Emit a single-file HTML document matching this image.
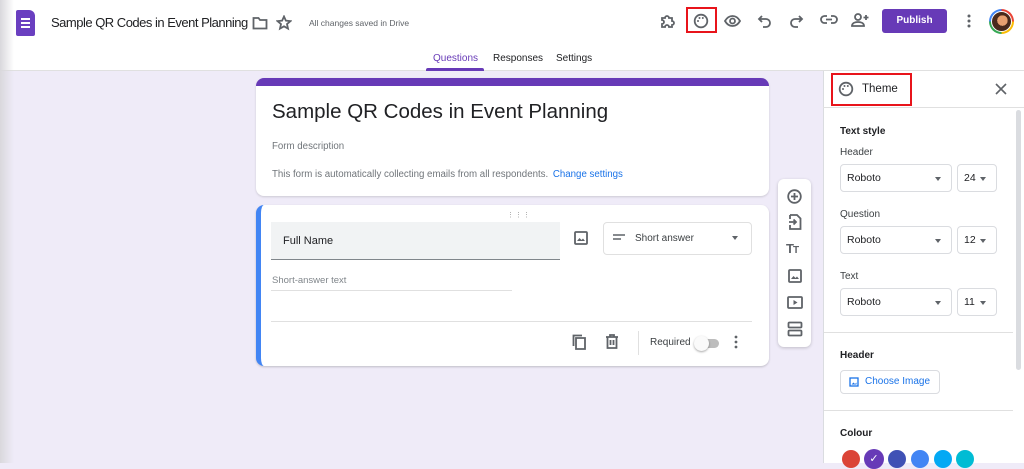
<!DOCTYPE html>
<html><head><meta charset="utf-8"><style>
*{box-sizing:border-box;margin:0;padding:0}
body{width:1024px;height:463px;overflow:hidden;background:#efebf8;font-family:"Liberation Sans",Arial,sans-serif;color:#202124;position:relative}
.abs{position:absolute}
svg{display:block}
.ic{stroke:#5f6368;fill:none;stroke-width:1.8}
.sel{position:absolute;border:1px solid #dadce0;border-radius:4px;background:#fff;font-size:10.5px;color:#202124;padding-left:6px;display:flex;align-items:center}
.sel:after{content:"";position:absolute;right:10px;top:50%;margin-top:-1px;border:3px solid transparent;border-top:4px solid #5f6368}
.lbl{position:absolute;font-size:11px;color:#3c4043}
</style></head><body>
<div class="abs" style="left:0;top:0;width:1024px;height:71px;background:#fff;border-bottom:1px solid #e0e0e0"></div>
<div class="abs" style="left:0;top:0;width:14px;height:463px;background:linear-gradient(90deg,#d9d8dc,rgba(230,228,235,0))"></div>
<div class="abs" style="left:16px;top:10px;width:19px;height:26px;background:#6a3fc0;border-radius:2px 6px 2px 2px"></div>
<div class="abs" style="left:21px;top:18px;width:9px;height:10px;border-top:2px solid #fff;border-bottom:2px solid #fff"><div style="margin-top:2px;height:2px;background:#fff"></div></div>
<div class="abs" style="left:51px;top:15px;font-size:13px;letter-spacing:-0.5px;color:#202124">Sample QR Codes in Event Planning</div>
<svg class="abs" style="left:252px;top:16px" width="16" height="14"><path class="ic" d="M1.5 2h5l1.5 2h6.5v8.5h-13z" stroke-width="1.5"/></svg>
<svg class="abs" style="left:276px;top:15px" width="16" height="16"><path class="ic" stroke-width="1.3" d="M8 1.5l1.9 4.2 4.6.4-3.5 3 1 4.5L8 11.3l-4 2.3 1-4.5-3.5-3 4.6-.4z"/></svg>
<div class="abs" style="left:309px;top:18px;font-size:8.5px;color:#5f6368">All changes saved in Drive</div>
<svg class="abs" style="left:660px;top:13px" width="16" height="16"><path class="ic" stroke-width="1.5" d="M2 5h3a2 2 0 1 1 4 0h3v3a2 2 0 1 1 0 4v2H9a2 2 0 1 0-4 0H2v-3a2 2 0 1 0 0-4z"/></svg>
<div class="abs" style="left:686px;top:7px;width:31px;height:26px;border:2px solid #e8141b"></div>
<svg class="abs" style="left:693px;top:13px" width="16" height="16"><circle class="ic" stroke-width="1.4" cx="8" cy="8" r="6.3"/><circle cx="5" cy="8" r="1" fill="#5f6368"/><circle cx="6.5" cy="5" r="1" fill="#5f6368"/><circle cx="9.8" cy="5" r="1" fill="#5f6368"/></svg>
<svg class="abs" style="left:724px;top:14px" width="17" height="14"><path class="ic" stroke-width="1.4" d="M1 7c2-3.5 4.5-5 7.5-5S14 3.5 16 7c-2 3.5-4.5 5-7.5 5S3 10.5 1 7z"/><circle class="ic" stroke-width="1.4" cx="8.5" cy="7" r="2.5"/></svg>
<svg class="abs" style="left:757px;top:13px" width="16" height="16"><path class="ic" stroke-width="1.4" d="M5 3L2 6l3 3M2 6h7a4 4 0 0 1 0 8H6"/></svg>
<svg class="abs" style="left:788px;top:13px" width="16" height="16"><path class="ic" stroke-width="1.4" d="M11 3l3 3-3 3M14 6H7a4 4 0 0 0 0 8h3"/></svg>
<svg class="abs" style="left:820px;top:14px" width="18" height="12"><path class="ic" stroke-width="1.5" d="M7 2H4.5a3.5 3.5 0 0 0 0 7H7M11 2h2.5a3.5 3.5 0 0 1 0 7H11M6 5.5h6"/></svg>
<svg class="abs" style="left:851px;top:12px" width="18" height="16"><circle class="ic" stroke-width="1.4" cx="7" cy="5" r="3"/><path class="ic" stroke-width="1.4" d="M1 14c0-3 3-4 6-4s6 1 6 4zM15 3v5M12.5 5.5h5"/></svg>
<div class="abs" style="left:882px;top:9px;width:65px;height:24px;background:#673ab7;border-radius:3px;color:#fff;font-size:10px;font-weight:bold;text-align:center;line-height:24px">Publish</div>
<svg class="abs" style="left:966px;top:13px" width="6" height="16"><circle cx="3" cy="3" r="1.5" fill="#5f6368"/><circle cx="3" cy="8" r="1.5" fill="#5f6368"/><circle cx="3" cy="13" r="1.5" fill="#5f6368"/></svg>
<div class="abs" style="left:989px;top:9px;width:25px;height:25px;border-radius:50%;background:conic-gradient(#ea4335 0 25%,#fbbc04 0 50%,#34a853 0 75%,#4285f4 0);padding:2px"><div style="width:100%;height:100%;border-radius:50%;background:radial-gradient(circle at 55% 45%,#e8a070 0 35%,#4a2a1c 36%);border:1px solid #fff"></div></div>
<div class="abs" style="left:433px;top:53px;font-size:10px;color:#673ab7">Questions</div>
<div class="abs" style="left:426px;top:68px;width:58px;height:3px;background:#673ab7;border-radius:2px 2px 0 0"></div>
<div class="abs" style="left:493px;top:53px;font-size:10px;color:#202124">Responses</div>
<div class="abs" style="left:556px;top:53px;font-size:10px;color:#202124">Settings</div>
<div class="abs" style="left:256px;top:78px;width:513px;height:118px;background:#fff;border-radius:8px;border-top:8px solid #673ab7;box-shadow:0 1px 2px rgba(0,0,0,.15)"></div>
<div class="abs" style="left:272px;top:100px;font-size:20.5px;color:#202124">Sample QR Codes in Event Planning</div>
<div class="abs" style="left:272px;top:141px;font-size:9.7px;color:#70757a">Form description</div>
<div class="abs" style="left:272px;top:169px;font-size:9.7px;color:#70757a">This form is automatically collecting emails from all respondents. <span style="color:#1a73e8;margin-left:2px">Change settings</span></div>
<div class="abs" style="left:256px;top:205px;width:513px;height:161px;background:#fff;border-radius:8px;border-left:5px solid #4285f4;box-shadow:0 1px 2px rgba(0,0,0,.2)"></div>
<div class="abs" style="left:507px;top:211px;font-size:7px;color:#999;letter-spacing:1px">⋮⋮⋮</div>
<div class="abs" style="left:271px;top:222px;width:289px;height:38px;background:#f1f3f4;border-bottom:1px solid #80868b"></div>
<div class="abs" style="left:283px;top:235px;font-size:11px;color:#202124">Full Name</div>
<svg class="abs" style="left:574px;top:231px" width="14" height="14"><rect class="ic" stroke-width="1.4" x="1" y="1" width="12" height="12" rx="1"/><path d="M3 10l2.5-3 2 2 1.5-1.5L11 10z" fill="#5f6368"/></svg>
<div class="abs" style="left:603px;top:222px;width:149px;height:33px;border:1px solid #e0e0e0;border-radius:4px"></div>
<svg class="abs" style="left:613px;top:234px" width="12" height="8"><path stroke="#5f6368" stroke-width="1.5" d="M0 1h12M0 5h8"/></svg>
<div class="abs" style="left:635px;top:233px;font-size:10px;color:#3c4043">Short answer</div>
<div class="abs" style="left:732px;top:236px;border:3px solid transparent;border-top:4px solid #5f6368"></div>
<div class="abs" style="left:272px;top:275px;font-size:9.5px;color:#80868b">Short-answer text</div>
<div class="abs" style="left:271px;top:290px;width:241px;height:1px;background:#e0e0e0"></div>
<div class="abs" style="left:271px;top:321px;width:481px;height:1px;background:#e0e0e0"></div>
<svg class="abs" style="left:572px;top:334px" width="14" height="16"><path class="ic" stroke-width="1.5" d="M4 4h9v11H4zM1.5 12V1.5H10"/></svg>
<svg class="abs" style="left:605px;top:334px" width="14" height="15"><path class="ic" stroke-width="1.5" d="M1 3h12M5 3V1h4v2M2.5 3v11h9V3M5.5 6v5M8.5 6v5"/></svg>
<div class="abs" style="left:638px;top:331px;width:1px;height:24px;background:#e0e0e0"></div>
<div class="abs" style="left:650px;top:337px;font-size:10px;color:#3c4043">Required</div>
<div class="abs" style="left:697px;top:339px;width:22px;height:9px;border-radius:5px;background:#bdbdbd"></div>
<div class="abs" style="left:694px;top:336px;width:15px;height:15px;border-radius:50%;background:#fafafa;box-shadow:0 1px 2px rgba(0,0,0,.35)"></div>
<svg class="abs" style="left:733px;top:335px" width="6" height="14"><circle cx="3" cy="2" r="1.4" fill="#5f6368"/><circle cx="3" cy="7" r="1.4" fill="#5f6368"/><circle cx="3" cy="12" r="1.4" fill="#5f6368"/></svg>
<div class="abs" style="left:778px;top:179px;width:33px;height:168px;background:#fff;border-radius:6px;box-shadow:0 1px 3px rgba(0,0,0,.2)"></div>
<svg class="abs" style="left:787px;top:189px" width="15" height="15"><circle class="ic" stroke-width="1.4" cx="7.5" cy="7.5" r="6.3"/><path class="ic" stroke-width="1.4" d="M7.5 4v7M4 7.5h7"/></svg>
<svg class="abs" style="left:788px;top:214px" width="14" height="16"><path class="ic" stroke-width="1.4" d="M2 1h7l3.5 3.5V15H2V11M2 5V1M1 8h7M5.5 5.5L8 8l-2.5 2.5"/></svg>
<div class="abs" style="left:786px;top:241px;font-size:13px;font-weight:bold;color:#5f6368;letter-spacing:-1px">T<span style="font-size:10px">T</span></div>
<svg class="abs" style="left:788px;top:269px" width="14" height="14"><rect class="ic" stroke-width="1.4" x="1" y="1" width="12" height="12" rx="1"/><path d="M3 10l2.5-3 2 2 1.5-1.5L11 10z" fill="#5f6368"/></svg>
<svg class="abs" style="left:787px;top:296px" width="16" height="13"><rect class="ic" stroke-width="1.4" x="1" y="1" width="14" height="11" rx="1"/><path d="M6.5 4v5l4-2.5z" fill="#5f6368"/></svg>
<svg class="abs" style="left:787px;top:321px" width="16" height="16"><rect class="ic" stroke-width="1.4" x="1.5" y="1.5" width="13" height="5" rx="1"/><rect class="ic" stroke-width="1.4" x="1.5" y="9.5" width="13" height="5" rx="1"/></svg>
<div class="abs" style="left:823px;top:71px;width:201px;height:392px;background:#fff;border-left:1px solid #dadce0"></div>
<div class="abs" style="left:823px;top:107px;width:201px;height:1px;background:#e0e0e0"></div>
<div class="abs" style="left:831px;top:73px;width:81px;height:33px;border:2px solid #e8141b"></div>
<svg class="abs" style="left:838px;top:81px" width="16" height="16"><circle class="ic" stroke-width="1.4" cx="8" cy="8" r="6.3"/><circle cx="5" cy="8" r="1" fill="#5f6368"/><circle cx="6.5" cy="5" r="1" fill="#5f6368"/><circle cx="9.8" cy="5" r="1" fill="#5f6368"/></svg>
<div class="abs" style="left:862px;top:83px;font-size:11.5px;color:#202124">Theme</div>
<svg class="abs" style="left:995px;top:83px" width="12" height="12"><path stroke="#5f6368" stroke-width="1.6" d="M1 1l10 10M11 1L1 11"/></svg>
<div class="abs" style="left:1016px;top:110px;width:5px;height:260px;background:#dadce0;border-radius:3px"></div>
<div class="lbl" style="left:840px;top:126px;font-weight:bold;color:#202124;font-size:10px">Text style</div>
<div class="lbl" style="left:840px;top:147px;font-size:10px">Header</div>
<div class="sel" style="left:840px;top:164px;width:112px;height:28px">Roboto</div>
<div class="sel" style="left:957px;top:164px;width:40px;height:28px">24</div>
<div class="lbl" style="left:840px;top:209px;font-size:10px">Question</div>
<div class="sel" style="left:840px;top:226px;width:112px;height:28px">Roboto</div>
<div class="sel" style="left:957px;top:226px;width:40px;height:28px">12</div>
<div class="lbl" style="left:840px;top:271px;font-size:10px">Text</div>
<div class="sel" style="left:840px;top:288px;width:112px;height:28px">Roboto</div>
<div class="sel" style="left:957px;top:288px;width:40px;height:28px">11</div>
<div class="abs" style="left:824px;top:332px;width:189px;height:1px;background:#e0e0e0"></div>
<div class="lbl" style="left:840px;top:350px;font-weight:bold;color:#202124;font-size:10px">Header</div>
<div class="abs" style="left:840px;top:370px;width:100px;height:24px;border:1px solid #dadce0;border-radius:4px"></div>
<svg class="abs" style="left:849px;top:377px" width="10" height="10"><rect x="1" y="1" width="8" height="8" fill="none" stroke="#1a73e8" stroke-width="1.3"/><path d="M2.5 7.5l2-2 1.5 1.5 1.5-1.5v2z" fill="#1a73e8"/></svg>
<div class="abs" style="left:865px;top:376px;font-size:10px;color:#1a73e8">Choose Image</div>
<div class="abs" style="left:824px;top:410px;width:189px;height:1px;background:#e0e0e0"></div>
<div class="lbl" style="left:840px;top:428px;font-weight:bold;color:#202124;font-size:10px">Colour</div>
<div class="abs" style="left:842px;top:450px;width:18px;height:18px;border-radius:50%;background:#db4437"></div>
<div class="abs" style="left:864px;top:449px;width:20px;height:20px;border-radius:50%;background:#673ab7;color:#fff;font-size:11px;text-align:center;line-height:20px">✓</div>
<div class="abs" style="left:888px;top:450px;width:18px;height:18px;border-radius:50%;background:#3f51b5"></div>
<div class="abs" style="left:911px;top:450px;width:18px;height:18px;border-radius:50%;background:#4285f4"></div>
<div class="abs" style="left:934px;top:450px;width:18px;height:18px;border-radius:50%;background:#03a9f4"></div>
<div class="abs" style="left:956px;top:450px;width:18px;height:18px;border-radius:50%;background:#00bcd4"></div>
</body></html>
